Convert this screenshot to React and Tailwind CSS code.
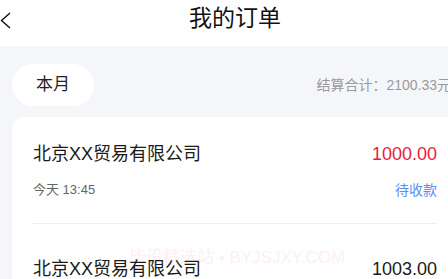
import React from "react";

const font = { fontFamily: '"Liberation Sans", "Noto Sans CJK SC", sans-serif' };

function Row({ name, amount, amountClass, time, status, first }) {
  return (
    <div className={first ? "pt-[25px] pb-[24px] border-b border-[#eeeeee]" : "pt-[33px] pb-[24px]"}>
      <div className="flex items-baseline justify-between">
        <span className="text-[18px] leading-[24px] text-[#1a1a1a]">{name}</span>
        <span className={"text-[18px] leading-[24px] " + amountClass}>{amount}</span>
      </div>
      {time && (
        <div className="mt-[15px] flex items-center justify-between">
          <span className="text-[13px] leading-[18px] text-[#666666]">{time}</span>
          <span className="text-[14px] leading-[18px] text-[#5a8cf8]">{status}</span>
        </div>
      )}
    </div>
  );
}

export default function App() {
  return (
    <div className="w-[448px] h-[279px] overflow-hidden bg-[#f5f6fa]" style={font}>
      <div className="w-[470px] relative">
        <header className="h-[46px] bg-white relative flex justify-center">
          <svg className="absolute left-0 top-[12px]" width="12" height="18" viewBox="0 0 12 18">
            <polyline points="10,1 1.5,8.5 10,16" fill="none" stroke="#111" strokeWidth="1.4" />
          </svg>
          <h1 className="text-[23px] leading-[36px] text-[#111] font-normal">我的订单</h1>
        </header>
        <div className="flex items-center justify-between pl-[12px] pr-[19px] pt-[18px]">
          <div className="h-[42px] w-[82px] rounded-full bg-white flex items-center justify-center text-[17px] text-[#222]">
            本月
          </div>
          <div className="text-[14px] text-[#9a9a9a]">结算合计：2100.33元</div>
        </div>
        <div className="mx-[12px] mt-[11px] bg-white rounded-xl px-[21px] relative">
          <div className="absolute left-[117px] top-[128px] text-[17px] text-[#fdeff6] whitespace-nowrap pointer-events-none">
            毕设精选站 • BYJSJXY.COM
          </div>
          <div className="relative">
            <Row first name="北京XX贸易有限公司" amount="1000.00" amountClass="text-[#e8213d]" time="今天 13:45" status="待收款" />
            <Row name="北京XX贸易有限公司" amount="1003.00" amountClass="text-[#1a1a1a]" />
          </div>
        </div>
      </div>
    </div>
  );
}
